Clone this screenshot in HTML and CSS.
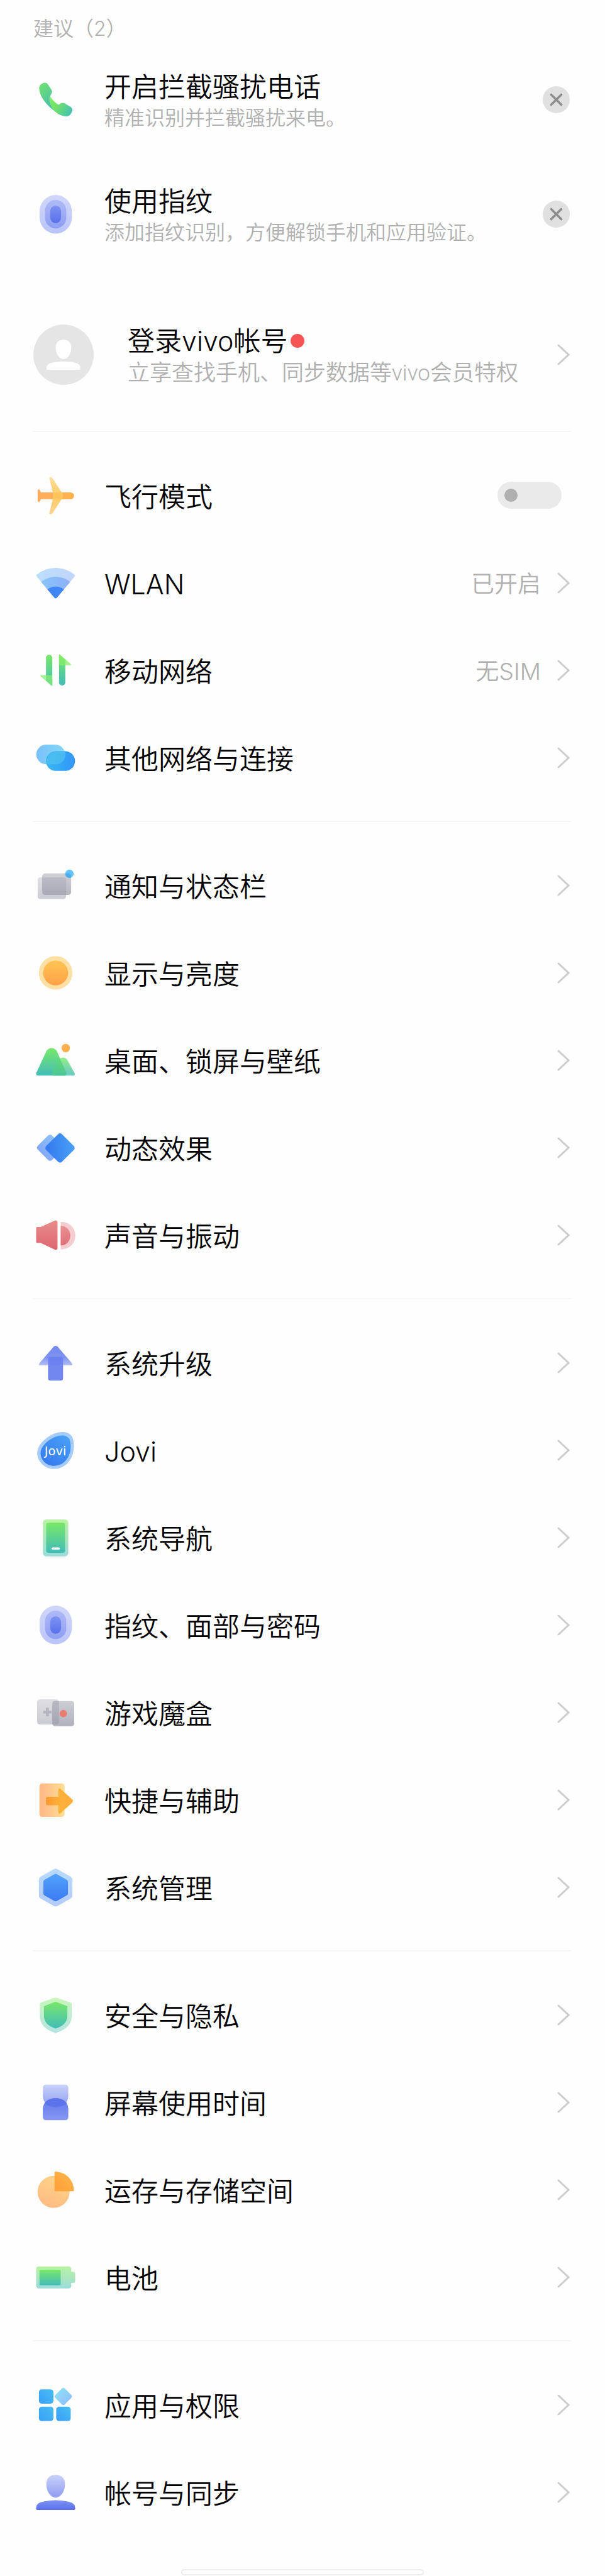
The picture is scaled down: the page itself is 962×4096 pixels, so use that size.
FILE: index.html
```html
<!DOCTYPE html>
<html lang="zh-CN">
<head>
<meta charset="utf-8">
<meta name="viewport" content="width=device-width, initial-scale=1">
<title>设置</title>
<link rel="stylesheet" href="styles.css">
</head>
<body>
<svg class="defs" aria-hidden="true">
  <defs>
    <linearGradient id="green" x1="0" y1="0" x2="0" y2="1"><stop offset="0" stop-color="#78e868"/><stop offset="1" stop-color="#42bcb8"/></linearGradient>
    <linearGradient id="green-phone" x1="0.1" y1="0" x2="0.6" y2="1"><stop offset="0" stop-color="#6fe070"/><stop offset="1" stop-color="#48c0ae"/></linearGradient>
    <linearGradient id="green-lobe" x1="0" y1="0.3" x2="1" y2="0.8"><stop offset="0" stop-color="#7aea62"/><stop offset="0.3" stop-color="#72e268"/><stop offset="1" stop-color="#44bfb4"/></linearGradient>
    <linearGradient id="green-pale" x1="0" y1="0" x2="0" y2="1"><stop offset="0" stop-color="#b9f3a2"/><stop offset="1" stop-color="#9cdcd9"/></linearGradient>
    <linearGradient id="green-mist" x1="0" y1="0" x2="0" y2="1"><stop offset="0" stop-color="#c8f6ba"/><stop offset="1" stop-color="#b4e4e2"/></linearGradient>
    <linearGradient id="indigo" x1="0" y1="0" x2="0" y2="1"><stop offset="0" stop-color="#7e92f2"/><stop offset="1" stop-color="#5a70ec"/></linearGradient>
    <linearGradient id="indigo-mid" x1="0" y1="0" x2="0" y2="1"><stop offset="0" stop-color="#aebaf7"/><stop offset="1" stop-color="#8e9ef2"/></linearGradient>
    <linearGradient id="indigo-pale" x1="0" y1="0" x2="0" y2="1"><stop offset="0" stop-color="#d0d6fa"/><stop offset="1" stop-color="#bac4f8"/></linearGradient>
    <linearGradient id="indigo-fade" x1="0" y1="0" x2="0" y2="1"><stop offset="0" stop-color="#cad1fa"/><stop offset="1" stop-color="#8d9df2"/></linearGradient>
    <linearGradient id="indigo-roof" x1="0" y1="0" x2="0" y2="1"><stop offset="0" stop-color="#7287ee"/><stop offset="0.6" stop-color="#7f93f2"/><stop offset="1" stop-color="#b5c0f8"/></linearGradient>
    <linearGradient id="indigo-up" x1="0" y1="0" x2="0" y2="1"><stop offset="0" stop-color="#586fea"/><stop offset="1" stop-color="#8092f2"/></linearGradient>
    <linearGradient id="blue" x1="0" y1="0" x2="0" y2="1"><stop offset="0" stop-color="#52a4fa"/><stop offset="1" stop-color="#3c78f4"/></linearGradient>
    <linearGradient id="blue-diag" x1="1" y1="0" x2="0.2" y2="1"><stop offset="0" stop-color="#4aa2f6"/><stop offset="1" stop-color="#357af0"/></linearGradient>
    <linearGradient id="blue-pale" x1="0" y1="0" x2="0" y2="1"><stop offset="0" stop-color="#b9dafc"/><stop offset="1" stop-color="#b4cbfa"/></linearGradient>
    <linearGradient id="blue-soft" x1="0" y1="0" x2="0" y2="1"><stop offset="0" stop-color="#8cc0f8"/><stop offset="1" stop-color="#84a8f8"/></linearGradient>
    <linearGradient id="wave-outer" x1="0" y1="0" x2="1" y2="0"><stop offset="0" stop-color="#bcdffc"/><stop offset="1" stop-color="#c2d4fc"/></linearGradient>
    <linearGradient id="wave-mid" x1="0" y1="0" x2="1" y2="0"><stop offset="0" stop-color="#86c4fa"/><stop offset="1" stop-color="#8eb0f8"/></linearGradient>
    <linearGradient id="sky" x1="1" y1="0" x2="0" y2="1"><stop offset="0" stop-color="#48bdf2"/><stop offset="1" stop-color="#389ff8"/></linearGradient>
    <linearGradient id="sky-pale" x1="0" y1="0" x2="1" y2="0"><stop offset="0" stop-color="#7ac0fa"/><stop offset="1" stop-color="#84d8f6"/></linearGradient>
    <linearGradient id="sky-deep" x1="0" y1="0" x2="1" y2="0"><stop offset="0" stop-color="#3ab8f2"/><stop offset="0.7" stop-color="#329ff8"/><stop offset="1" stop-color="#3698f8"/></linearGradient>
    <linearGradient id="sky-gem" x1="0" y1="0" x2="1" y2="0"><stop offset="0" stop-color="#8fdcf6"/><stop offset="1" stop-color="#8fc4fa"/></linearGradient>
    <linearGradient id="orange" x1="0" y1="0" x2="0" y2="1"><stop offset="0" stop-color="#ffc552"/><stop offset="1" stop-color="#ffa048"/></linearGradient>
    <linearGradient id="orange-wing" x1="0" y1="0" x2="0" y2="1"><stop offset="0" stop-color="#ffdc92"/><stop offset="0.5" stop-color="#fcc559"/><stop offset="1" stop-color="#ffd088"/></linearGradient>
    <linearGradient id="orange-body" x1="0" y1="0" x2="1" y2="0"><stop offset="0" stop-color="#ffab5e"/><stop offset="1" stop-color="#ffb34a"/></linearGradient>
    <linearGradient id="orange-door" x1="0" y1="0" x2="1" y2="0"><stop offset="0" stop-color="#ffb684"/><stop offset="1" stop-color="#ffdf94"/></linearGradient>
    <linearGradient id="orange-arrow" x1="0" y1="0" x2="1" y2="0"><stop offset="0" stop-color="#ff962e"/><stop offset="0.5" stop-color="#ffb038"/><stop offset="1" stop-color="#ffae3a"/></linearGradient>
    <linearGradient id="orange-disc" x1="0.7" y1="0" x2="0.3" y2="1"><stop offset="0" stop-color="#ffd488"/><stop offset="1" stop-color="#ffba84"/></linearGradient>
    <linearGradient id="orange-slice" x1="1" y1="0" x2="0" y2="1"><stop offset="0" stop-color="#ffb040"/><stop offset="1" stop-color="#ff9e34"/></linearGradient>
    <linearGradient id="gray" x1="0" y1="0" x2="0" y2="1"><stop offset="0" stop-color="#c8c8d0"/><stop offset="1" stop-color="#a8a9b5"/></linearGradient>
    <linearGradient id="gray-pale" x1="0" y1="0" x2="0" y2="1"><stop offset="0" stop-color="#dedee3"/><stop offset="1" stop-color="#cbccd3"/></linearGradient>
    <linearGradient id="red" x1="0" y1="0" x2="0" y2="1"><stop offset="0" stop-color="#e88c8c"/><stop offset="1" stop-color="#de6670"/></linearGradient>
  </defs>
  <symbol id="chevron" viewBox="0 0 20 34"><path d="M2 2l16 15L2 32" fill="none" stroke="#cdcdcd" stroke-width="3" stroke-linecap="round" stroke-linejoin="miter"/></symbol>
  <symbol id="finger" viewBox="0 0 80 80">
    <rect x="11.3" y="5.7" width="57.6" height="69.3" rx="28.8" fill="url(#indigo-pale)"/>
    <rect x="21" y="14.7" width="38" height="51" rx="19" fill="url(#indigo-mid)"/>
    <rect x="30.3" y="24.7" width="19.4" height="31.3" rx="9.7" fill="url(#indigo)"/>
  </symbol>
  <symbol id="cross" viewBox="0 0 48 48"><path d="M15 15l18 18M33 15L15 33" fill="none" stroke="#8c8c8c" stroke-width="4" stroke-linecap="round"/></symbol>
</svg>

<main class="settings">
  <section class="tips">
    <h2 class="tips-title">建议（2）</h2>
    <div class="row tip">
      <svg class="icon" viewBox="0 0 80 80" aria-hidden="true">
        <path d="M10.500 19C10.500 14 16 9.700 21 9.700Q24 9.700 26 12.500L33 23Q34.500 26 32.500 29L30 33.500Q28 39 30.500 47Q33 54 38.500 60.500C24 51 10 33 10.500 19z" fill="url(#green-phone)"/>
        <path d="M30 33.500C33 39.500 38 44.500 44 48.500Q46 49.500 47.500 48Q51 44.500 55.500 46.300L66 52.500Q70.500 55 69.800 59.500C68 66 64.500 69.500 60 69.800Q49 70 38.500 61Q27.500 50 30 33.500z" fill="url(#green-lobe)"/>
      </svg>
      <div class="copy"><p class="title">开启拦截骚扰电话</p><p class="note">精准识别并拦截骚扰来电。</p></div>
      <button class="close" type="button" aria-label="关闭"><svg viewBox="0 0 48 48"><use href="#cross"/></svg></button>
    </div>
    <div class="row tip">
      <svg class="icon" viewBox="0 0 80 80" aria-hidden="true"><use href="#finger"/></svg>
      <div class="copy"><p class="title">使用指纹</p><p class="note">添加指纹识别，方便解锁手机和应用验证。</p></div>
      <button class="close" type="button" aria-label="关闭"><svg viewBox="0 0 48 48"><use href="#cross"/></svg></button>
    </div>
  </section>

  <a class="row account" href="#account">
    <svg class="avatar" viewBox="0 0 108 108" aria-hidden="true">
      <circle cx="54" cy="54" r="54" fill="#e5e5e5"/>
      <path d="M54 27C62 27 68 32 68 41C68 52 62 62 54 62C46 62 40 52 40 41C40 32 46 27 54 27z" fill="#fff"/>
      <path d="M24 80V76C24 70 34 66 54 66C74 66 84 70 84 76V80Q84 81 83 81H25Q24 81 24 80z" fill="#fff"/>
    </svg>
    <div class="copy"><p class="title">登录vivo帐号<span class="badge"></span></p><p class="note">立享查找手机、同步数据等vivo会员特权</p></div>
    <svg class="chevron" aria-hidden="true"><use href="#chevron"/></svg>
  </a>

  <section class="group">
    <label class="row" for="airplane">
      <svg class="icon" viewBox="0 0 80 80" aria-hidden="true">
        <path d="M7.700 31Q7.700 29.600 9 29.600C12 29.600 12.500 32 13.500 35H67A6 6 0 0 1 67 47H13.500C12.500 50 12 52 9 52Q7.700 52 7.700 50.500z" fill="url(#orange-body)"/>
        <path d="M28.700 9.500Q28.700 7.800 30.500 7.800H31.500Q33.500 8 34.600 9.700L52 37Q54 41 52 45L34.600 72Q33.500 73.700 31.500 73.800H30.500Q28.700 73.800 28.700 72L35.300 45V37z" fill="url(#orange-wing)" opacity=".92"/>
      </svg>
      <span class="name">飞行模式</span>
      <input class="switch" id="airplane" type="checkbox" role="switch">
    </label>
    <a class="row" href="#wlan">
      <svg class="icon" viewBox="0 0 80 80" aria-hidden="true">
        <path d="M5.600 28.500Q4.500 27 6.200 25.700C26 9.500 54 9.500 73.800 25.700Q75.500 27 74.400 28.500L42 67Q40 69 38 67z" fill="url(#wave-outer)"/>
        <path d="M14 38.600C29 26.600 51 26.600 66 38.600L42 67Q40 69 38 67z" fill="url(#wave-mid)"/>
        <path d="M25.200 52C34 45.300 46 45.300 54.800 52L42 67Q40 69 38 67z" fill="#4085f4"/>
      </svg>
      <span class="name">WLAN</span><span class="value">已开启</span>
      <svg class="chevron" aria-hidden="true"><use href="#chevron"/></svg>
    </a>
    <a class="row" href="#mobile">
      <svg class="icon" viewBox="0 0 80 80" aria-hidden="true">
        <path d="M22.700 18A5.600 5.600 0 0 1 34 18V66.500Q34 69 32.200 67.600L22.700 59z" fill="url(#green)"/>
        <path d="M13.500 49H34V66.500Q34 69 32.200 67.600L13 51Q12 49.300 13.500 49z" fill="#86ec74" opacity=".75"/>
        <path d="M46 13.500Q46 11 47.800 12.400L57.300 21V62A5.600 5.600 0 0 1 46 62z" fill="url(#green)"/>
        <path d="M46 13.500Q46 11 47.800 12.400L67 29Q68.300 31 66.500 31.300H46z" fill="#86ec68" opacity=".75"/>
      </svg>
      <span class="name">移动网络</span><span class="value">无SIM</span>
      <svg class="chevron" aria-hidden="true"><use href="#chevron"/></svg>
    </a>
    <a class="row" href="#network">
      <svg class="icon" viewBox="0 0 80 80" aria-hidden="true">
        <rect x="5.300" y="17" width="51.700" height="35" rx="17.500" fill="url(#sky-pale)"/>
        <rect x="22.700" y="28.700" width="52" height="35.300" rx="17.600" fill="url(#sky-deep)"/>
        <path d="M40.300 28.700H56.800A17.500 17.500 0 0 1 39.500 52H25.200A17.600 17.600 0 0 1 40.300 28.700z" fill="#4dbff0" opacity=".8"/>
      </svg>
      <span class="name">其他网络与连接</span>
      <svg class="chevron" aria-hidden="true"><use href="#chevron"/></svg>
    </a>
  </section>

  <section class="group">
    <a class="row" href="#notice">
      <svg class="icon" viewBox="0 0 80 80" aria-hidden="true">
        <rect x="7.700" y="25.800" width="51" height="39" rx="5" fill="url(#gray-pale)"/>
        <rect x="16" y="19" width="51.700" height="38.400" rx="5" fill="url(#gray)" opacity=".85"/>
        <path d="M16 25.800H54Q58.700 25.800 58.700 30.500V57.400H21Q16 57.400 16 52.500z" fill="#9c9daa" opacity=".25"/>
        <circle cx="64.700" cy="19.600" r="7.500" fill="#62c3f8"/>
        <path d="M57.300 19H63Q67.500 19.500 67.700 24V26.500A7.500 7.500 0 0 1 57.300 19z" fill="#4caeee"/>
      </svg>
      <span class="name">通知与状态栏</span>
      <svg class="chevron" aria-hidden="true"><use href="#chevron"/></svg>
    </a>
    <a class="row" href="#display">
      <svg class="icon" viewBox="0 0 80 80" aria-hidden="true">
        <circle cx="40" cy="40.500" r="30" fill="#ffe0a4"/><circle cx="40" cy="40.500" r="22.300" fill="url(#orange)"/>
      </svg>
      <span class="name">显示与亮度</span>
      <svg class="chevron" aria-hidden="true"><use href="#chevron"/></svg>
    </a>
    <a class="row" href="#desktop">
      <svg class="icon" viewBox="0 0 80 80" aria-hidden="true">
        <circle cx="58" cy="18.600" r="7.500" fill="#ffb04c"/>
        <path d="M8 68Q3.500 67 5.500 62.500L23.500 24Q27 18.600 32.700 18.600Q38.500 18.600 42 24L59 62.500Q60.500 67 57 68z" fill="url(#green)"/>
        <path d="M35 68Q31.500 67 33.500 62.500L44.500 41Q48 35.600 53.300 35.600Q58.500 35.600 61.500 41L73.500 62.500Q76 67 72 68z" fill="url(#green)" opacity=".8"/>
        <path d="M47 38L59 62.500Q60.500 67 57 68H35Q31.500 67 33.500 62.500L44.500 41z" fill="#54d07c" opacity=".55"/>
      </svg>
      <span class="name">桌面、锁屏与壁纸</span>
      <svg class="chevron" aria-hidden="true"><use href="#chevron"/></svg>
    </a>
    <a class="row" href="#motion">
      <svg class="icon" viewBox="0 0 80 80" aria-hidden="true">
        <rect x="12" y="22.500" width="36" height="36" rx="5" transform="rotate(45 30 40.500)" fill="url(#blue-soft)"/>
        <rect x="27.800" y="21" width="40" height="40" rx="5" transform="rotate(45 47.800 41)" fill="url(#blue-diag)"/>
      </svg>
      <span class="name">动态效果</span>
      <svg class="chevron" aria-hidden="true"><use href="#chevron"/></svg>
    </a>
    <a class="row" href="#sound">
      <svg class="icon" viewBox="0 0 80 80" aria-hidden="true">
        <path d="M5 28Q5 26 7 26H13L38.500 14.400Q43.300 13 43.300 18V63Q43.300 68 38.500 66.600L13 54.500H7Q5 54.500 5 52.500z" fill="url(#red)"/>
        <path d="M49 16.700C84 17 84 66 49 66z" fill="#f5cdd0"/>
        <path d="M49 24C72 24 72 59 49 59z" fill="url(#red)" opacity=".92"/>
      </svg>
      <span class="name">声音与振动</span>
      <svg class="chevron" aria-hidden="true"><use href="#chevron"/></svg>
    </a>
  </section>

  <section class="group">
    <a class="row" href="#upgrade">
      <svg class="icon" viewBox="0 0 80 80" aria-hidden="true">
        <path d="M36.500 11.500Q40 8.500 43.500 11.500L69 41Q71.500 45 67 45.200H13Q8.500 45 11 41z" fill="url(#indigo-roof)"/>
        <rect x="26.300" y="29.800" width="27" height="42.500" rx="4" fill="#6a80ef" opacity=".95"/>
      </svg>
      <span class="name">系统升级</span>
      <svg class="chevron" aria-hidden="true"><use href="#chevron"/></svg>
    </a>
    <a class="row" href="#jovi">
      <svg class="icon" viewBox="0 0 80 80" aria-hidden="true">
        <path d="M7 45C7 28 32 8 52 8C66 8 72.700 16 72.700 32C72.700 56 58 73.800 37 73.800C20 73.800 7 61 7 45z" fill="#a5cbfa"/>
        <path d="M13 45C13 31 35 14 51 14C62 14 67 20 67 33C67 54 54 68.400 37 68.400C23 68.400 13 58 13 45z" fill="url(#blue-diag)"/>
        <text class="jovi" x="39.500" y="50" text-anchor="middle">Jovi</text>
      </svg>
      <span class="name">Jovi</span>
      <svg class="chevron" aria-hidden="true"><use href="#chevron"/></svg>
    </a>
    <a class="row" href="#navigation">
      <svg class="icon" viewBox="0 0 80 80" aria-hidden="true">
        <rect x="17" y="8" width="45.700" height="66" rx="6" fill="url(#green-pale)"/>
        <rect x="23" y="13.800" width="34" height="54" rx="4" fill="url(#green)"/>
        <rect x="32.500" y="58" width="15" height="4" rx="2" fill="#fff"/>
      </svg>
      <span class="name">系统导航</span>
      <svg class="chevron" aria-hidden="true"><use href="#chevron"/></svg>
    </a>
    <a class="row" href="#password">
      <svg class="icon" viewBox="0 0 80 80" aria-hidden="true"><use href="#finger"/></svg>
      <span class="name">指纹、面部与密码</span>
      <svg class="chevron" aria-hidden="true"><use href="#chevron"/></svg>
    </a>
    <a class="row" href="#game">
      <svg class="icon" viewBox="0 0 80 80" aria-hidden="true">
        <rect x="6.700" y="17" width="39.300" height="45" rx="5" fill="url(#gray-pale)"/>
        <rect x="34" y="20" width="39.300" height="45" rx="5" fill="url(#gray)" opacity=".9"/>
        <path d="M39 20H46V57Q46 62 41 62H34V25Q34 20 39 20z" fill="#9899a5" opacity=".35"/>
        <path d="M25.300 32.200V47.200M17.800 39.700H32.800" stroke="#b3b4bd" stroke-width="5" fill="none"/>
        <circle cx="53.700" cy="42.300" r="6.600" fill="#ec7c70"/>
      </svg>
      <span class="name">游戏魔盒</span>
      <svg class="chevron" aria-hidden="true"><use href="#chevron"/></svg>
    </a>
    <a class="row" href="#shortcut">
      <svg class="icon" viewBox="0 0 80 80" aria-hidden="true">
        <rect x="11" y="11" width="45" height="60" rx="5" fill="url(#orange-door)"/>
        <path d="M25 35H45V21.500Q45.500 18.500 48.500 20.500L69.500 39.500Q72.500 42.500 69.500 45.500L48.500 64.500Q45.500 66.500 45 63.500V50H25Q22.700 50 22.700 47.700V37.300Q22.700 35 25 35z" fill="url(#orange-arrow)"/>
      </svg>
      <span class="name">快捷与辅助</span>
      <svg class="chevron" aria-hidden="true"><use href="#chevron"/></svg>
    </a>
    <a class="row" href="#system">
      <svg class="icon" viewBox="0 0 80 80" aria-hidden="true">
        <path d="M37 7.800Q40 6.200 43 7.800L67 21.500Q70 23.500 70 26.500V55.500Q70 58.500 67 60.500L43 74.200Q40 75.800 37 74.200L13 60.500Q10 58.500 10 55.500V26.500Q10 23.500 13 21.500z" fill="url(#blue-pale)"/>
        <path d="M38 17Q40 15.800 42 17L60 27Q62 28.500 62 30.500V51.500Q62 53.500 60 55L42 65Q40 66 38 65L20 55Q18 53.500 18 51.500V30.500Q18 28.500 20 27z" fill="url(#blue)"/>
      </svg>
      <span class="name">系统管理</span>
      <svg class="chevron" aria-hidden="true"><use href="#chevron"/></svg>
    </a>
  </section>

  <section class="group">
    <a class="row" href="#security">
      <svg class="icon" viewBox="0 0 80 80" aria-hidden="true">
        <path d="M38.500 9.700Q40 9 41.500 9.700L67 18.300Q68.700 19 68.700 21V42C68.700 58 58 67 41.500 72.300Q40 72.900 38.500 72.300C22 67 11.700 58 11.700 42V21Q11.700 19 13.400 18.300z" fill="url(#green-mist)"/>
        <path d="M40 16.700L61 24.800V42C61 54 53 60.500 40 64.800C27 60.500 19 54 19 42V24.800z" fill="url(#green)"/>
      </svg>
      <span class="name">安全与隐私</span>
      <svg class="chevron" aria-hidden="true"><use href="#chevron"/></svg>
    </a>
    <a class="row" href="#screentime">
      <svg class="icon" viewBox="0 0 80 80" aria-hidden="true">
        <path d="M23 8.800H56.700Q62.700 8.800 62.700 14.800V29C62.700 42 52 48.800 40 48.800C28 48.800 17 42 17 29V14.800Q17 8.800 23 8.800z" fill="url(#indigo-fade)"/>
        <path d="M17 53C17 40 28 33 40 33C52 33 62.700 40 62.700 53V66.500Q62.700 72.500 56.700 72.500H23Q17 72.500 17 66.500z" fill="url(#indigo-up)" opacity=".95"/>
        <path d="M20 42C28 30 52 30 60 42C52 51 28 51 20 42z" fill="#5a71ea" opacity=".7"/>
      </svg>
      <span class="name">屏幕使用时间</span>
      <svg class="chevron" aria-hidden="true"><use href="#chevron"/></svg>
    </a>
    <a class="row" href="#storage">
      <svg class="icon" viewBox="0 0 80 80" aria-hidden="true">
        <circle cx="36.300" cy="44.300" r="28.700" fill="url(#orange-disc)"/>
        <path d="M38 9Q38 8 39 8C58 8.500 72 22 72.700 42Q72.700 43 71.700 43H40Q38 43 38 41z" fill="url(#orange-slice)" opacity=".95"/>
      </svg>
      <span class="name">运存与存储空间</span>
      <svg class="chevron" aria-hidden="true"><use href="#chevron"/></svg>
    </a>
    <a class="row" href="#battery">
      <svg class="icon" viewBox="0 0 80 80" aria-hidden="true">
        <path d="M10 21H63Q68 21 68 26V30.700H71Q75 30.700 75 34.700V46.700Q75 50.700 71 50.700H68V55.500Q68 60.500 63 60.500H10Q5 60.500 5 55.500V26Q5 21 10 21z" fill="url(#green-pale)"/>
        <path d="M14 27H47Q49 27 49 29V53Q49 55 47 55H14Q11 55 11 52V30Q11 27 14 27z" fill="url(#green)"/>
      </svg>
      <span class="name">电池</span>
      <svg class="chevron" aria-hidden="true"><use href="#chevron"/></svg>
    </a>
  </section>

  <section class="group">
    <a class="row" href="#apps">
      <svg class="icon" viewBox="0 0 80 80" aria-hidden="true">
        <rect x="10" y="12.700" width="26" height="25.500" rx="5" fill="url(#sky)"/>
        <rect x="10" y="43.800" width="26" height="25.500" rx="5" fill="url(#sky)"/>
        <rect x="41" y="43.800" width="26" height="25.500" rx="5" fill="url(#sky)"/>
        <rect x="41.700" y="13.300" width="24" height="24" rx="4" transform="rotate(45 53.700 25.300)" fill="url(#sky-gem)"/>
      </svg>
      <span class="name">应用与权限</span>
      <svg class="chevron" aria-hidden="true"><use href="#chevron"/></svg>
    </a>
    <a class="row" href="#sync">
      <svg class="icon" viewBox="0 0 80 80" aria-hidden="true">
        <path d="M40 9C50 9 56.700 15 56.700 26C56.700 39 49 50 40 50C31 50 23.300 39 23.300 26C23.300 15 30 9 40 9z" fill="url(#indigo-fade)"/>
        <path d="M5 70C4.500 61 10 58.500 20 56.500Q40 53 60 56.500C70 58.500 75.500 61 75 70Q75 72 73 72H7Q5 72 5 70z" fill="url(#indigo)"/>
      </svg>
      <span class="name">帐号与同步</span>
      <svg class="chevron" aria-hidden="true"><use href="#chevron"/></svg>
    </a>
  </section>

  <div class="home-bar"></div>
</main>
</body>
</html>
```

FILE: styles.css
```css
* {
  box-sizing: border-box;
}

body {
  margin: 0;
  background: #fefefe;
  color: #000;
  font-family: Inter, "Noto Sans CJK SC", sans-serif;
  font-size: 43px;
  font-weight: 350;
}

p,
h2 {
  margin: 0;
  font-weight: inherit;
}

.defs {
  position: absolute;
  width: 0;
  height: 0;
}

.settings {
  display: flex;
  flex-direction: column;
  padding: 24px 53px 1px;
}

.tips-title {
  color: #b0b0b0;
  font-size: 32px;
  line-height: 43px;
}

.row {
  display: flex;
  align-items: center;
  min-height: 139px;
  padding-right: 3px;
  color: inherit;
  text-decoration: none;
}

.icon {
  flex: none;
  width: 71px;
  height: 71px;
  margin-right: 42px;
}

.name,
.copy {
  flex: 1;
  min-width: 0;
}

.name {
  padding-top: 4px;
  line-height: 64px;
}

.title {
  display: flex;
  align-items: center;
  line-height: 52px;
}

.note {
  color: #b0b0b0;
  font-family: Roboto, "Noto Sans CJK SC", sans-serif;
  font-size: 32px;
  line-height: 48px;
}

.tip {
  min-height: 182px;
}

.copy {
  padding-top: 7px;
}

.account {
  min-height: 180px;
  margin: 43px 0 31px;
}

.account .note {
  font-size: 35px;
  line-height: 52px;
}

.avatar {
  flex: none;
  width: 96px;
  height: 96px;
  margin-right: 54px;
}

.badge {
  width: 22px;
  height: 22px;
  margin-left: 4px;
  border-radius: 50%;
  background: #f75555;
}

.close {
  flex: none;
  width: 43px;
  height: 43px;
  padding: 0;
  border: 0;
  border-radius: 50%;
  background: #e0e0e0;
}

.close svg {
  display: block;
  width: 100%;
  height: 100%;
}

.value {
  margin-right: 26px;
  padding-top: 4px;
  color: #b0b0b0;
  font-size: 37px;
  line-height: 64px;
}

.chevron {
  flex: none;
  width: 20px;
  height: 34px;
}

.switch {
  appearance: none;
  display: flex;
  align-items: center;
  width: 102px;
  height: 43px;
  margin: 0 13px 0 0;
  padding: 0 11px;
  border-radius: 22px;
  background: #eaeaea;
}

.switch::before {
  content: "";
  width: 21px;
  height: 21px;
  border-radius: 50%;
  background: #b0b0b0;
}

.switch:checked {
  justify-content: flex-end;
  background: #4085f4;
}

.group {
  padding: 31px 0;
  border-top: 2px solid #f7f7f7;
}

.jovi {
  fill: #fff;
  font-family: "DejaVu Sans", sans-serif;
  font-size: 22px;
  font-weight: 400;
}

.home-bar {
  align-self: center;
  width: 45%;
  height: 10px;
  margin-top: 22px;
  border: 2px solid #ececec;
  border-radius: 5px;
  background: #fff;
}
```
